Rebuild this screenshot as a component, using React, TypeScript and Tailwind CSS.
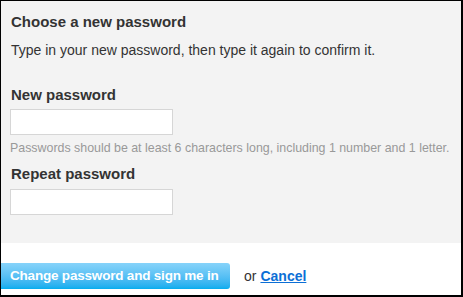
export default function App() {
  return (
    <div
      className="w-[463px] h-[297px] bg-white border-black border-t border-l border-r-2 border-b-2 flex flex-col text-[#333]"
      style={{ fontFamily: '"Liberation Sans", Arial, sans-serif' }}
    >
      <div className="bg-[#f3f3f3] h-[242px] px-[9px] pt-[12px]">
        <h2 className="text-[15px] font-bold leading-[18px] pl-px">Choose a new password</h2>
        <p className="text-[14px] leading-[17px] mt-[11px] pl-px">
          Type in your new password, then type it again to confirm it.
        </p>
        <label className="block text-[15px] font-bold leading-[18px] mt-[27px] pl-px">New password</label>
        <input
          type="password"
          className="block mt-[5px] w-[163px] h-[26px] bg-white border border-[#d6d6d6] outline-none"
        />
        <p className="text-[12.4px] leading-[14px] text-[#999] mt-[6px] whitespace-nowrap">
          Passwords should be at least 6 characters long, including 1 number and 1 letter.
        </p>
        <label className="block text-[15px] font-bold leading-[18px] mt-[10px] pl-px">Repeat password</label>
        <input
          type="password"
          className="block mt-[6px] w-[163px] h-[26px] bg-white border border-[#d6d6d6] outline-none"
        />
      </div>
      <div className="flex items-center mt-[20px]">
        <button className="h-[26px] w-[229px] shrink-0 rounded-r-[3px] bg-gradient-to-b from-[#86d3fa] to-[#00adee] text-white font-bold text-[13.5px] tracking-[-0.2px] text-left pl-[9px] whitespace-nowrap">
          Change password and sign me in
        </button>
        <span className="text-[14px] ml-[14px]">or</span>
        <a href="#" className="text-[14px] font-bold text-[#0c6fd6] underline ml-[4px]">
          Cancel
        </a>
      </div>
    </div>
  );
}
